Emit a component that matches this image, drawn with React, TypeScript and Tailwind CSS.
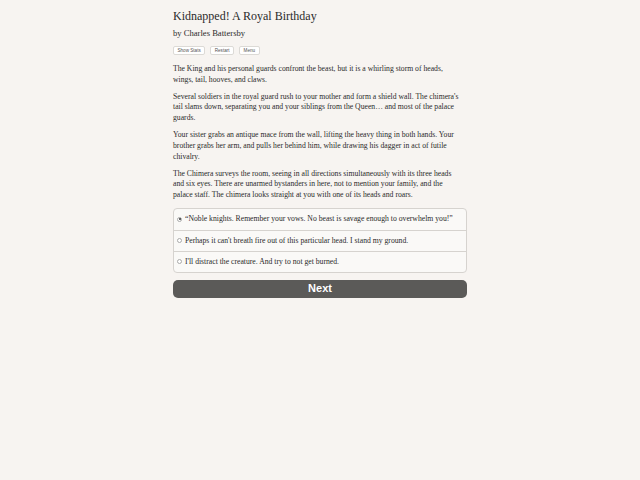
// lines broken where the original page wraps them
const paragraphs = [
  [
    "The King and his personal guards confront the beast, but it is a whirling storm of heads,",
    "wings, tail, hooves, and claws.",
  ],
  [
    "Several soldiers in the royal guard rush to your mother and form a shield wall. The chimera's",
    "tail slams down, separating you and your siblings from the Queen\u2026 and most of the palace",
    "guards.",
  ],
  [
    "Your sister grabs an antique mace from the wall, lifting the heavy thing in both hands. Your",
    "brother grabs her arm, and pulls her behind him, while drawing his dagger in act of futile",
    "chivalry.",
  ],
  [
    "The Chimera surveys the room, seeing in all directions simultaneously with its three heads",
    "and six eyes. There are unarmed bystanders in here, not to mention your family, and the",
    "palace staff. The chimera looks straight at you with one of its heads and roars.",
  ],
];

const choices = [
  "\u201cNoble knights. Remember your vows. No beast is savage enough to overwhelm you!\u201d",
  "Perhaps it can't breath fire out of this particular head. I stand my ground.",
  "I'll distract the creature. And try to not get burned.",
];

const menuButtons = ["Show Stats", "Restart", "Menu"];

export default function App() {
  return (
    <div className="min-h-[480px] w-[640px] bg-[#f7f4f1] text-[#2b2b2b] font-['Liberation_Serif',serif]">
      <div className="mx-auto w-[294px] pt-[8px]">
        <h1 className="text-[12px] leading-[16px]">Kidnapped! A Royal Birthday</h1>
        <h2 className="mt-[3px] text-[8.6px] leading-[12px]">by Charles Battersby</h2>

        <div className="mt-[7px] flex gap-[5px] font-['Liberation_Sans',sans-serif]">
          {menuButtons.map((b) => (
            <button
              key={b}
              className="h-[9px] rounded-[2px] border border-[#dcdad6] bg-white px-[3.5px] text-[4.6px] leading-[7px] text-[#555]"
            >
              {b}
            </button>
          ))}
        </div>

        <div className="mt-[9px] flex flex-col gap-[6.3px] text-[7.7px] leading-[10.7px]">
          {paragraphs.map((lines, i) => (
            <p key={i}>
              {lines.map((l, j) => (
                <span key={j} className="block whitespace-nowrap">
                  {l}
                </span>
              ))}
            </p>
          ))}
        </div>

        <div className="mt-[7px] overflow-hidden rounded-[4px] border border-[#d6d3cf] bg-[#faf9f7]">
          {choices.map((c, i) => (
            <div
              key={i}
              className={`flex h-[21px] items-center gap-[3px] px-[3px] text-[7.7px] ${i > 0 ? "border-t border-[#d6d3cf]" : ""}`}
            >
              <span className="flex h-[5px] w-[5px] shrink-0 items-center justify-center rounded-full border border-[#aaa] bg-white">
                {i === 0 && <span className="h-[2px] w-[2px] rounded-full bg-[#333]" />}
              </span>
              <span>{c}</span>
            </div>
          ))}
        </div>

        <button className="mt-[7px] h-[18px] w-full rounded-[5px] bg-[#5b5a58] font-['Liberation_Sans',sans-serif] text-[11px] font-bold text-white">
          Next
        </button>
      </div>
    </div>
  );
}
